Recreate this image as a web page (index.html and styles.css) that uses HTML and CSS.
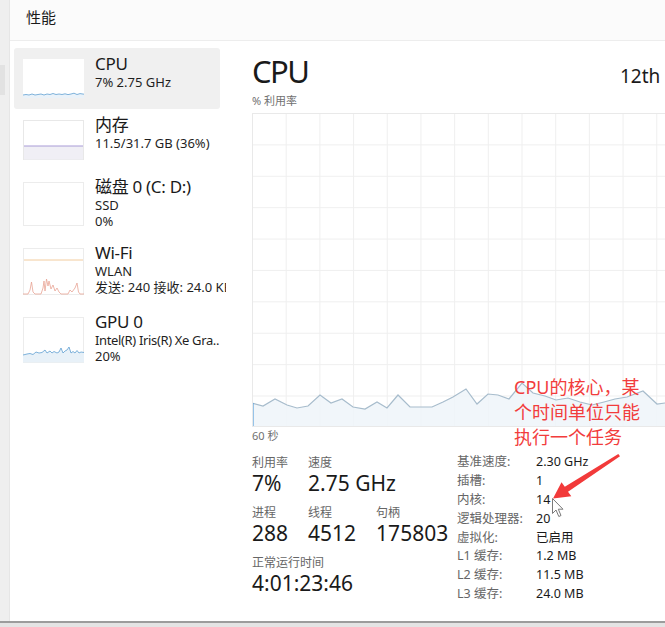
FILE: index.html
```html
<!DOCTYPE html>
<html lang="zh-CN">
<head>
<meta charset="utf-8">
<title>性能</title>
<link rel="stylesheet" href="styles.css">
</head>
<body>
<div class="window">
  <div class="rail"><div class="rail-mark"></div></div>
  <div class="app">
    <header class="topbar"><span class="topbar-title">性能</span></header>
    <div class="content">
      <nav class="sidebar">
        <div class="item item-cpu selected">
          <svg class="thumb t-cpu" viewBox="0 0 61 39" width="61" height="39">
            <rect x="0" y="0" width="61" height="39" fill="#fff"/>
            <polygon points="0,36 3,35.5 6,36 9,35 12,36 15,35.5 18,35 21,36 24,35 27,35.5 30,34.5 33,35.5 36,35 39,35.5 42,34.8 45,35.6 48,35 51,34.2 54,35.5 57,34.6 61,35.2 61,39 0,39" fill="#eaf2f9"/>
            <polyline points="0,36 3,35.5 6,36 9,35 12,36 15,35.5 18,35 21,36 24,35 27,35.5 30,34.5 33,35.5 36,35 39,35.5 42,34.8 45,35.6 48,35 51,34.2 54,35.5 57,34.6 61,35.2" fill="none" stroke="#5f9fd2" stroke-width="0.8"/>
          </svg>
          <div class="item-text">
            <div class="item-title">CPU</div>
            <div class="item-sub">7% 2.75 GHz</div>
          </div>
        </div>
        <div class="item item-mem">
          <svg class="thumb" viewBox="0 0 61 40" width="61" height="40">
            <rect x="0.5" y="0.5" width="60" height="39" fill="#fff" stroke="#e8e8e8"/>
            <rect x="1" y="26" width="59" height="13.5" fill="#f0eff5"/>
            <line x1="1" y1="26" x2="60" y2="26" stroke="#a89bd6" stroke-width="1"/>
          </svg>
          <div class="item-text">
            <div class="item-title">内存</div>
            <div class="item-sub">11.5/31.7 GB (36%)</div>
          </div>
        </div>
        <div class="item item-disk">
          <svg class="thumb" viewBox="0 0 61 44" width="61" height="44">
            <rect x="0.5" y="0.5" width="60" height="43" fill="#fff" stroke="#ececec"/>
          </svg>
          <div class="item-text">
            <div class="item-title">磁盘 0 (C: D:)</div>
            <div class="item-sub">SSD</div>
            <div class="item-sub">0%</div>
          </div>
        </div>
        <div class="item item-wifi">
          <svg class="thumb" viewBox="0 0 61 47" width="61" height="47">
            <rect x="0.5" y="0.5" width="60" height="46" fill="#fff" stroke="#ececec"/>
            <line x1="1" y1="12" x2="60" y2="12" stroke="#f2cc9e" stroke-width="1"/>
            <polyline points="0,46 5,46 7,42 8.5,34 10,44 12,46 18,46 20,40 21,33 22,43 23.5,31 25,38 26,33 28,41 30,37 32,43 34,40 36,44 38,46 45,46 47,42 49,44 52,40 54,35 55.5,44 57,46 61,46" fill="none" stroke="#e9a595" stroke-width="0.8"/>
          </svg>
          <div class="item-text">
            <div class="item-title">Wi-Fi</div>
            <div class="item-sub">WLAN</div>
            <div class="item-sub">发送: 240 接收: 24.0 KB/s</div>
          </div>
        </div>
        <div class="item item-gpu">
          <svg class="thumb" viewBox="0 0 61 46" width="61" height="46">
            <rect x="0.5" y="0.5" width="60" height="45" fill="#fff" stroke="#ececec"/>
            <polygon points="0,38 4,37 7,36.5 10,37.5 13,35 16,36 19,35.5 22,33 24,36 27,34 29,36 31,34.5 34,36 36,35 38,31 40,36 42,34 44,33 46,30 48,36 50,34.5 52,36 54,33.5 56,36 58,35 61,35.5 61,45.5 0,45.5" fill="#e8f1f8"/>
            <polyline points="0,38 4,37 7,36.5 10,37.5 13,35 16,36 19,35.5 22,33 24,36 27,34 29,36 31,34.5 34,36 36,35 38,31 40,36 42,34 44,33 46,30 48,36 50,34.5 52,36 54,33.5 56,36 58,35 61,35.5" fill="none" stroke="#5f9fd2" stroke-width="0.8"/>
          </svg>
          <div class="item-text">
            <div class="item-title">GPU 0</div>
            <div class="item-sub item-sub-tight">Intel(R) Iris(R) Xe Gra..</div>
            <div class="item-sub">20%</div>
          </div>
        </div>
      </nav>
      <main class="main">
        <div class="title-row">
          <h1 class="title">CPU</h1>
          <div class="cpu-name">12th Gen Intel(R) Core(TM) i7-12700H</div>
        </div>
        <div class="axis-label">% 利用率</div>
        <div class="graph">
          <svg class="graph-svg" viewBox="0 0 440 314" width="440" height="314">
            <polygon points="0,290 11,293 23,286 35,292 45,295 56,293 68,282 79,290 90,286 101,294 113,296 125,289 135,295 146,282 158,294 180,294 191,289 201,284 214,276 225,291 236,281 246,282 257,286 270,270 281,280 293,283 304,287 316,285 328,289 340,292 352,289 363,286 375,284 391,278 405,291 413,290 428,289 440,290 440,314 0,314" fill="#eef4f9" fill-opacity="0.85"/>
            <polyline points="0,290 11,293 23,286 35,292 45,295 56,293 68,282 79,290 90,286 101,294 113,296 125,289 135,295 146,282 158,294 180,294 191,289 201,284 214,276 225,291 236,281 246,282 257,286 270,270 281,280 293,283 304,287 316,285 328,289 340,292 352,289 363,286 375,284 391,278 405,291 413,290 428,289 440,290" fill="none" stroke="#a7bccc" stroke-width="1.2"/>
            <line x1="0.8" y1="290" x2="0.8" y2="314" stroke="#5aa2dc" stroke-width="1.6"/>
          </svg>
        </div>
        <div class="axis-label time-label">60 秒</div>
        <section class="stats">
          <div class="stats-left">
            <div class="stat-row">
              <div class="stat"><div class="stat-label">利用率</div><div class="stat-value">7%</div></div>
              <div class="stat"><div class="stat-label">速度</div><div class="stat-value">2.75 GHz</div></div>
            </div>
            <div class="stat-row">
              <div class="stat"><div class="stat-label">进程</div><div class="stat-value">288</div></div>
              <div class="stat"><div class="stat-label">线程</div><div class="stat-value">4512</div></div>
              <div class="stat"><div class="stat-label">句柄</div><div class="stat-value">175803</div></div>
            </div>
            <div class="stat-row">
              <div class="stat"><div class="stat-label">正常运行时间</div><div class="stat-value">4:01:23:46</div></div>
            </div>
          </div>
          <dl class="stats-right">
            <dt>基准速度:</dt><dd>2.30 GHz</dd>
            <dt>插槽:</dt><dd>1</dd>
            <dt>内核:</dt><dd>14</dd>
            <dt>逻辑处理器:</dt><dd>20</dd>
            <dt>虚拟化:</dt><dd>已启用</dd>
            <dt>L1 缓存:</dt><dd>1.2 MB</dd>
            <dt>L2 缓存:</dt><dd>11.5 MB</dd>
            <dt>L3 缓存:</dt><dd>24.0 MB</dd>
          </dl>
        </section>
      </main>
    </div>
  </div>
  <div class="note">CPU的核心，某<br>个时间单位只能<br>执行一个任务</div>
  <svg class="arrow" viewBox="0 0 665 627" width="665" height="627">
    <polygon points="618.3,454 564.8,486.8 561.5,482.3 553,498.5 571.3,496.3 568,491.8 620,456.2" fill="#f23a3a"/>
  </svg>
  <svg class="cursor" viewBox="0 0 13 20" width="13" height="20">
    <path d="M0.5 0.5 L0.5 15.5 L4 12 L6.8 18.5 L9 17.5 L6.3 11.2 L11 11.2 Z" fill="#fff" stroke="#7a7a7a" stroke-width="1" stroke-linejoin="round"/>
  </svg>
</div>
</body>
</html>
```

FILE: styles.css
```css
* { box-sizing: border-box; }
html, body { margin: 0; padding: 0; }
body {
  width: 665px;
  height: 627px;
  overflow: hidden;
  background: #e4e4e4;
  font-family: "Noto Sans", "Noto Sans CJK SC", sans-serif;
  color: #1b1b1b;
}
.window {
  position: relative;
  height: 623px;
  display: flex;
  background: #ffffff;
  border-bottom: 2px solid #9c9c9c;
  overflow: hidden;
}
.rail {
  width: 10px;
  flex: none;
  background: #efefef;
  border-right: 1px solid #e6e6e6;
  padding-top: 65px;
}
.rail-mark {
  width: 5px;
  height: 30px;
  background: #e2e2e2;
}
.app {
  flex: 1;
  display: flex;
  flex-direction: column;
  min-width: 0;
}
.topbar {
  height: 41px;
  flex: none;
  background: #fbfbfb;
  border-bottom: 1px solid #ededed;
  padding-left: 16px;
  display: flex;
  align-items: center;
}
.topbar-title {
  font-size: 15px;
  line-height: 20px;
  margin-top: -7px;
  color: #1a1a1a;
}
.content {
  flex: 1;
  display: flex;
  min-height: 0;
}
.sidebar {
  width: 216px;
  flex: none;
  padding: 7px 6px 0 4px;
  overflow: hidden;
}
.item {
  display: flex;
  align-items: flex-start;
  padding: 11px 0 0 9px;
  border-radius: 3px;
  white-space: nowrap;
}
.item.selected { background: #f0f0f0; }
.item-cpu { height: 61px; }
.item-mem { height: 62px; }
.item-disk { height: 66px; }
.item-wifi { height: 69px; }
.item-gpu { height: 60px; }
.thumb { flex: none; display: block; }
.item-text {
  margin-left: 11px;
  margin-top: -6px;
}
.item-title {
  font-size: 17px;
  line-height: 21px;
  letter-spacing: -0.3px;
  color: #1a1a1a;
}
.item-sub {
  font-size: 13px;
  line-height: 16px;
  color: #1f1f1f;
}
.item-sub-tight { letter-spacing: -0.35px; }
.main {
  flex: 1;
  min-width: 0;
  overflow: hidden;
  padding: 12px 0 0 26px;
}
.title-row {
  display: grid;
  grid-template-columns: 368px max-content;
  align-items: baseline;
  white-space: nowrap;
}
.title {
  margin: 0;
  font-weight: 400;
  font-size: 31px;
  line-height: 36px;
  letter-spacing: -1.5px;
  color: #1a1a1a;
}
.cpu-name {
  font-size: 19px;
  line-height: 24px;
  color: #1a1a1a;
}
.axis-label {
  margin-top: 5px;
  font-size: 11px;
  line-height: 14px;
  color: #707070;
}
.graph {
  margin-top: 5px;
  width: 440px;
  height: 314px;
  border: 1px solid #e9e9e9;
  background-color: #ffffff;
  background-image:
    linear-gradient(to right, #efefef 1px, transparent 1px),
    linear-gradient(to bottom, #efefef 1px, transparent 1px);
  background-size: 33.7px 31.4px;
  background-position: -1px -1px;
  overflow: hidden;
}
.graph-svg { display: block; margin: -1px 0 0 -1px; }
.time-label { margin-top: 2px; }
.stats {
  margin-top: 10px;
  display: grid;
  grid-template-columns: 205px auto;
}
.stats-left {
  padding-top: 2px;
  display: flex;
  flex-direction: column;
  gap: 9px;
}
.stat-row {
  display: flex;
  gap: 20px;
}
.stat-label {
  font-size: 12px;
  line-height: 15px;
  color: #666666;
}
.stat-value {
  font-size: 21px;
  line-height: 26px;
  color: #1a1a1a;
  white-space: nowrap;
}
.stats-right {
  margin: 0;
  display: grid;
  grid-template-columns: 79px auto;
  grid-auto-rows: 18.8px;
  align-items: center;
  font-size: 12.5px;
  line-height: 16px;
}
.stats-right dt { color: #666666; white-space: nowrap; }
.stats-right dd { margin: 0; color: #1a1a1a; white-space: nowrap; }
.note {
  position: absolute;
  left: 514px;
  top: 375px;
  font-size: 18px;
  line-height: 25px;
  color: #f23c3c;
  white-space: nowrap;
}
.arrow {
  position: absolute;
  left: 0;
  top: 0;
  pointer-events: none;
}
.cursor {
  position: absolute;
  left: 552px;
  top: 498px;
}
```
